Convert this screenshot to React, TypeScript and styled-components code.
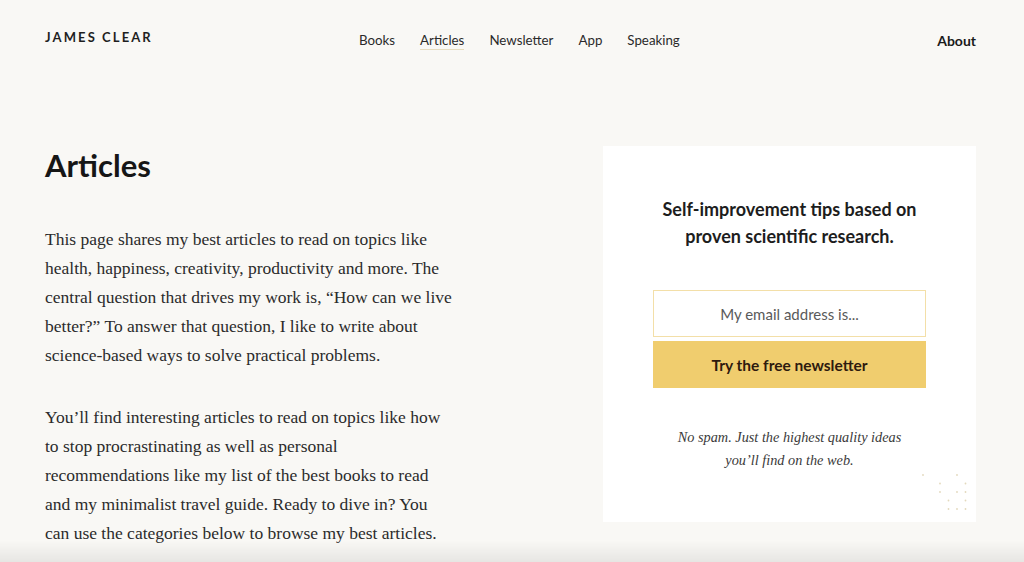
import React from "react";
import styled, { createGlobalStyle } from "styled-components";

const GlobalStyle = createGlobalStyle`
    html, body {
        margin: 0;
        padding: 0;
        background: #f9f8f5;
    }
    body {
        font-family: "Lato", "Liberation Sans", sans-serif;
        color: #1d1d1d;
        overflow: hidden;
    }
`;

const navItems = ["Books", "Articles", "Newsletter", "App", "Speaking"];

// dot pattern in the corner of the signup card (column, row)
const dots: Array<[number, number]> = [
    [0, 0],
    [4, 0],
    [2, 1],
    [5, 1],
    [2, 2],
    [4, 2],
    [5, 2],
    [3, 3],
    [5, 3],
    [3, 4],
    [4, 4],
    [5, 4],
];

const App = () => {
    return (
        <Page>
            <GlobalStyle />
            <Header>
                <Logo>JAMES CLEAR</Logo>
                <Nav>
                    {navItems.map((item) => (
                        <NavLink key={item} active={item === "Articles"}>
                            {item}
                        </NavLink>
                    ))}
                </Nav>
                <AboutLink>About</AboutLink>
            </Header>
            <Main>
                <Intro>
                    <Title>Articles</Title>
                    <Paragraph>
                        This page shares my best articles to read on topics
                        like health, happiness, creativity, productivity and
                        more. The central question that drives my work is,
                        “How can we live better?” To answer that question, I
                        like to write about science-based ways to solve
                        practical problems.
                    </Paragraph>
                    <Paragraph>
                        You’ll find interesting articles to read on topics like
                        how to stop procrastinating as well as personal
                        recommendations like my list of the best books to read
                        and my minimalist travel guide. Ready to dive in? You
                        can use the categories below to browse my best
                        articles.
                    </Paragraph>
                </Intro>
                <Card>
                    <CardTitle>
                        Self-improvement tips based on
                        <br />
                        proven scientific research.
                    </CardTitle>
                    <Form>
                        <EmailInput placeholder="My email address is..." />
                        <SubmitButton type="button">
                            Try the free newsletter
                        </SubmitButton>
                    </Form>
                    <Note>
                        No spam. Just the highest quality ideas
                        <br />
                        you’ll find on the web.
                    </Note>
                    <Dots width="48" height="40" viewBox="0 0 48 40">
                        {dots.map(([c, r]) => (
                            <circle
                                key={`${c}-${r}`}
                                cx={2 + c * 8.5}
                                cy={2 + r * 8.5}
                                r="0.9"
                                fill="#e3d9bd"
                            />
                        ))}
                    </Dots>
                </Card>
            </Main>
            <BottomFade />
        </Page>
    );
};

const Page = styled.div`
    min-height: 562px;
    padding: 0 48px 0 45px;
`;

const Header = styled.header`
    display: grid;
    grid-template-columns: 314px auto 1fr;
    align-items: center;
    height: 78px;
`;

const Logo = styled.div`
    font-size: 13px;
    font-weight: 700;
    letter-spacing: 2.1px;
    color: #1f1f1f;
    margin-top: -4px;
`;

const Nav = styled.nav`
    display: flex;
    gap: 25px;
    margin-top: 3px;
`;

const NavLink = styled.a<{ active?: boolean }>`
    font-size: 13.3px;
    color: #2a2a2a;
    padding-bottom: 1px;
    border-bottom: 1px solid
        ${(p) => (p.active ? "#e6dcbf" : "transparent")};
    cursor: pointer;
`;

const AboutLink = styled.a`
    justify-self: end;
    font-size: 14px;
    font-weight: 700;
    color: #1a1a1a;
    margin-top: 2px;
`;

const Main = styled.main`
    display: grid;
    grid-template-columns: 1fr 373px;
    align-items: start;
    padding-top: 68px;
`;

const Intro = styled.section`
    max-width: 410px;
`;

const Title = styled.h1`
    margin: 0 0 41px;
    font-size: 31px;
    font-weight: 700;
    line-height: 38px;
    color: #161616;
`;

const Paragraph = styled.p`
    margin: 0 0 33px;
    font-family: "Liberation Serif", "DejaVu Serif", serif;
    font-size: 17.5px;
    line-height: 29px;
    color: #2b2b2b;
`;

const Card = styled.aside`
    position: relative;
    background: #ffffff;
    padding: 50px 50px 50px;
    text-align: center;
`;

const CardTitle = styled.h2`
    margin: 0 0 40px;
    font-size: 18px;
    font-weight: 700;
    line-height: 27px;
    color: #1d1d1d;
`;

const Form = styled.form`
    display: flex;
    flex-direction: column;
    gap: 4px;
`;

const EmailInput = styled.input`
    box-sizing: border-box;
    height: 47px;
    border: 1px solid #f3dfa8;
    background: #fff;
    text-align: center;
    font-family: inherit;
    font-size: 15px;
    outline: none;
    &::placeholder {
        color: #5a5a5a;
    }
`;

const SubmitButton = styled.button`
    height: 47px;
    border: none;
    background: #f0cd6e;
    color: #2e1a0e;
    font-family: inherit;
    font-size: 15.5px;
    font-weight: 700;
    cursor: pointer;
`;

const Note = styled.p`
    margin: 38px 0 0;
    font-family: "Liberation Serif", "DejaVu Serif", serif;
    font-style: italic;
    font-size: 14.3px;
    line-height: 23px;
    color: #3a3a3a;
`;

const Dots = styled.svg`
    position: absolute;
    right: 7px;
    bottom: 9px;
`;

const BottomFade = styled.div`
    position: fixed;
    left: 0;
    right: 0;
    bottom: 0;
    height: 22px;
    background: linear-gradient(
        to bottom,
        rgba(0, 0, 0, 0),
        rgba(0, 0, 0, 0.07)
    );
    pointer-events: none;
`;

export default App;
